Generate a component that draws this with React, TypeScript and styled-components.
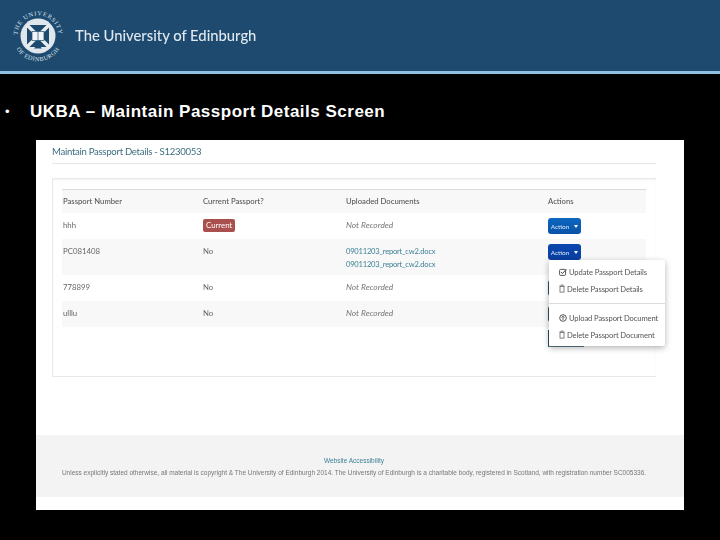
import React from "react";
import styled, { createGlobalStyle } from "styled-components";

const Global = createGlobalStyle`
  html, body { margin: 0; padding: 0; background: #000; }
  body { width: 720px; height: 540px; overflow: hidden; }
`;

const Slide = styled.div`
  width: 720px;
  height: 540px;
  background: #000;
  display: flex;
  flex-direction: column;
  font-family: "Liberation Sans", Arial, sans-serif;
`;

const Banner = styled.header`
  height: 71px;
  box-sizing: content-box;
  background: #1f4a70;
  border-bottom: 3px solid #8fc0e4;
  display: flex;
  align-items: center;
  padding-left: 12px;
  gap: 11px;
`;

const BannerName = styled.div`
  font-family: Lato, sans-serif;
  font-size: 14.8px;
  font-weight: 500;
  color: #dfe8ef;
  filter: blur(0.35px);
  white-space: nowrap;
  margin-top: -2px;
`;

const Bullet = styled.div`
  height: 66px;
  display: flex;
  align-items: flex-start;
  padding: 28px 0 0 5px;
  box-sizing: border-box;
  color: #fff;
  font-weight: 700;
  line-height: 20px;
  font-size: 17px;
  letter-spacing: 0.5px;
`;

const BulletDot = styled.span`
  width: 25px;
  font-size: 13px;
  font-weight: 400;
  letter-spacing: 0;
`;

const Shot = styled.main`
  margin: 0 36px;
  height: 370px;
  background: #fff;
  display: flex;
  flex-direction: column;
  font-family: Lato, sans-serif;
  font-size: 7.8px;
  color: #666;
  filter: blur(0.3px);
`;

const Content = styled.div`
  height: 295px;
  padding: 0 28px 0 16px;
  box-sizing: border-box;
  display: flex;
  flex-direction: column;
`;

const Title = styled.h1`
  margin: 0;
  height: 24px;
  box-sizing: border-box;
  border-bottom: 1px solid #e6e6e6;
  font-size: 9.6px;
  font-weight: 400;
  line-height: 23px;
  letter-spacing: -0.3px;
  color: #3f6f80;
`;

const Panel = styled.section`
  margin-top: 14px;
  height: 199px;
  box-sizing: border-box;
  border: 1px solid #e8e8e8;
  border-right: none;
  padding: 10px 0 0 9px;
  box-shadow: inset 0 1px 2px #f1f1f1;
`;

const Table = styled.div`
  position: relative;
  width: 584px;
  border-top: 1px solid #dcdcdc;
`;

const Row = styled.div<{ $h: number; $shade?: boolean }>`
  display: grid;
  grid-template-columns: 140px 143px 202px 99px;
  height: ${(p) => p.$h}px;
  padding-top: 5px;
  box-sizing: border-box;
  background: ${(p) => (p.$shade ? "#f8f8f8" : "#fff")};
  line-height: 13px;
`;

const Cell = styled.div`
  padding: 1px 0 0 1px;
  white-space: nowrap;
`;

const ActionCell = styled.div`
  padding-left: 1px;
`;

const HeadCell = styled.div`
  padding-left: 1px;
  white-space: nowrap;
  color: #555;
  font-weight: 500;
  font-size: 7.7px;
`;

const Empty = styled(Cell)`
  font-style: italic;
  color: #777;
  font-size: 8.4px;
`;

const DocLink = styled.a`
  display: block;
  color: #3d8197;
  font-size: 7.6px;
  letter-spacing: -0.22px;
  line-height: 12.5px;
`;

const Label = styled.span`
  display: inline-block;
  background: #a9504e;
  color: #fff;
  border-radius: 2px;
  padding: 0 3px;
  height: 13px;
  line-height: 13px;
`;

const ActionButton = styled.button<{ $open?: boolean; $covered?: boolean }>`
  display: flex;
  align-items: center;
  justify-content: center;
  gap: 5px;
  width: 33px;
  height: 16px;
  padding: 0;
  border: none;
  border-radius: 3px;
  background: ${(p) =>
    p.$covered
      ? "#2d4f63"
      : p.$open
        ? "linear-gradient(#0a46ae, #0a3fa0)"
        : "linear-gradient(#0c66c0, #0a52a8)"};
  color: #dcebf8;
  font: inherit;
  font-size: 6.5px;
`;

const Caret = styled.i`
  width: 0;
  height: 0;
  border-left: 2.5px solid transparent;
  border-right: 2.5px solid transparent;
  border-top: 3px solid #fff;
`;

const Menu = styled.div`
  position: absolute;
  left: 487px;
  top: 70px;
  width: 116px;
  height: 86px;
  box-sizing: border-box;
  background: #fff;
  border-radius: 2px;
  box-shadow: 0 2px 6px rgba(0, 0, 0, 0.3);
  padding: 4px 0 0 10px;
  color: #555;
  font-size: 7.6px;
  letter-spacing: -0.1px;

  &::before {
    content: "";
    position: absolute;
    left: -1px;
    bottom: -1px;
    width: 35px;
    height: 16px;
    border-left: 1px solid #2d4f63;
    border-bottom: 1px solid #5d7c8c;
    z-index: -1;
  }
`;

const MenuItem = styled.div`
  display: flex;
  align-items: center;
  gap: 2px;
  height: 16.5px;
  white-space: nowrap;
`;

const MenuRule = styled.div`
  height: 1px;
  background: #dcdcdc;
  margin: 6px 0 6px -10px;
`;

const Footer = styled.footer`
  height: 62px;
  background: #f3f3f3;
  padding: 20px 12px 0 0;
  box-sizing: border-box;
  text-align: center;
  font-family: "Liberation Sans", sans-serif;
  font-size: 6.5px;
  line-height: 12px;
  color: #777;
  white-space: nowrap;
`;

const FooterLink = styled.a`
  display: block;
  color: #3d8197;
`;

const Crest = () => (
  <svg width="52" height="54" viewBox="0 0 52 54" aria-hidden="true">
    <defs>
      <path id="ringTop" d="M6.74 34A20.5 20.5 0 1 1 45.26 34" />
      <path id="ringBottom" d="M2.3 35.6A25.2 25.2 0 0 0 49.7 35.6" />
    </defs>
    <text fontFamily="Liberation Serif, serif" fontSize="6.2" fill="#dfe8ef" letterSpacing="0.8" textAnchor="middle">
      <textPath href="#ringTop" startOffset="50%">THE UNIVERSITY</textPath>
    </text>
    <text fontFamily="Liberation Serif, serif" fontSize="6.2" fill="#dfe8ef" letterSpacing="0.5" textAnchor="middle">
      <textPath href="#ringBottom" startOffset="50%">OF EDINBURGH</textPath>
    </text>
    <circle cx="26" cy="27" r="17.5" fill="#dfe7ed" />
    <rect x="15" y="16" width="22" height="22" fill="#1f4a70" />
    <path d="M15 16L37 38M37 16L15 38" stroke="#e8eef2" strokeWidth="3.4" />
    <rect x="20" y="22.5" width="12" height="9" fill="#f2f5f7" stroke="#1f4a70" strokeWidth="0.7" />
    <path d="M26 22.5v9" stroke="#1f4a70" strokeWidth="0.7" />
    <path d="M22 39.5h8l-4-4.5z" fill="#1f4a70" />
  </svg>
);

const EditIcon = () => (
  <svg width="8" height="8" viewBox="0 0 8 8" aria-hidden="true">
    <rect x="0.6" y="1.4" width="6" height="6" rx="1" fill="none" stroke="#444" strokeWidth="0.9" />
    <path d="M2 4l1.5 1.5L7.5 1" fill="none" stroke="#444" strokeWidth="1" />
  </svg>
);

const TrashIcon = () => (
  <svg width="6" height="9" viewBox="0 0 6 8" aria-hidden="true">
    <path d="M0.5 1.3h5M2 1V.4h2V1" fill="none" stroke="#666" strokeWidth="0.6" />
    <rect x="1" y="2" width="4" height="5.6" fill="none" stroke="#666" strokeWidth="0.8" />
  </svg>
);

const UploadIcon = () => (
  <svg width="8" height="8" viewBox="0 0 8 8" aria-hidden="true">
    <circle cx="4" cy="4" r="3.3" fill="none" stroke="#444" strokeWidth="0.9" />
    <path d="M4 6V2.2M2.6 3.6L4 2.2l1.4 1.4" fill="none" stroke="#444" strokeWidth="0.8" />
  </svg>
);

const Action = ({ open, covered }: { open?: boolean; covered?: boolean }) => (
  <ActionCell>
    <ActionButton $open={open} $covered={covered}>
      Action <Caret />
    </ActionButton>
  </ActionCell>
);

export default function App() {
  return (
    <Slide>
      <Global />
      <Banner>
        <Crest />
        <BannerName>The University of Edinburgh</BannerName>
      </Banner>
      <Bullet>
        <BulletDot>•</BulletDot>
        UKBA – Maintain Passport Details Screen
      </Bullet>
      <Shot>
        <Content>
          <Title>Maintain Passport Details - S1230053</Title>
          <Panel>
            <Table>
              <Row $h={23} $shade>
                <HeadCell>Passport Number</HeadCell>
                <HeadCell>Current Passport?</HeadCell>
                <HeadCell>Uploaded Documents</HeadCell>
                <HeadCell>Actions</HeadCell>
              </Row>
              <Row $h={26}>
                <Cell>hhh</Cell>
                <Cell><Label>Current</Label></Cell>
                <Empty>Not Recorded</Empty>
                <Action />
              </Row>
              <Row $h={36} $shade>
                <Cell>PC081408</Cell>
                <Cell>No</Cell>
                <Cell>
                  <DocLink>09011203_report_cw2.docx</DocLink>
                  <DocLink>09011203_report_cw2.docx</DocLink>
                </Cell>
                <Action open />
              </Row>
              <Row $h={26}>
                <Cell>778899</Cell>
                <Cell>No</Cell>
                <Empty>Not Recorded</Empty>
                <Action covered />
              </Row>
              <Row $h={26} $shade>
                <Cell>ulllu</Cell>
                <Cell>No</Cell>
                <Empty>Not Recorded</Empty>
                <Action covered />
              </Row>
              <Menu>
                <MenuItem><EditIcon /> Update Passport Details</MenuItem>
                <MenuItem><TrashIcon /> Delete Passport Details</MenuItem>
                <MenuRule />
                <MenuItem><UploadIcon /> Upload Passport Document</MenuItem>
                <MenuItem><TrashIcon /> Delete Passport Document</MenuItem>
              </Menu>
            </Table>
          </Panel>
        </Content>
        <Footer>
          <FooterLink>Website Accessibility</FooterLink>
          Unless explicitly stated otherwise, all material is copyright &amp; The University of Edinburgh 2014. The University of Edinburgh is a charitable body, registered in Scotland, with registration number SC005336.
        </Footer>
      </Shot>
    </Slide>
  );
}
